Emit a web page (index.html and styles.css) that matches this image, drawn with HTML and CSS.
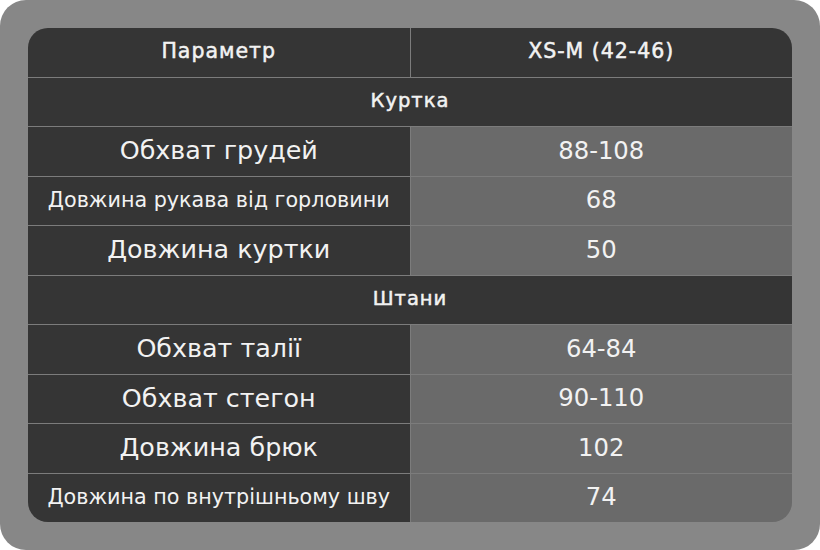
FILE: index.html
```html
<!DOCTYPE html>
<html lang="uk">
<head>
<meta charset="utf-8">
<link rel="stylesheet" href="styles.css">
</head>
<body>
<div class="frame">
  <div class="table">
    <div class="cell head">Параметр</div>
    <div class="cell head">XS-M (42-46)</div>
    <div class="cell section">Куртка</div>
    <div class="cell label">Обхват грудей</div>
    <div class="cell value">88-108</div>
    <div class="cell label small">Довжина рукава від горловини</div>
    <div class="cell value">68</div>
    <div class="cell label">Довжина куртки</div>
    <div class="cell value">50</div>
    <div class="cell section">Штани</div>
    <div class="cell label">Обхват талії</div>
    <div class="cell value">64-84</div>
    <div class="cell label">Обхват стегон</div>
    <div class="cell value">90-110</div>
    <div class="cell label">Довжина брюк</div>
    <div class="cell value">102</div>
    <div class="cell label small">Довжина по внутрішньому шву</div>
    <div class="cell value">74</div>
  </div>
</div>
</body>
</html>
```
FILE: styles.css
```css
html, body {
  margin: 0;
  padding: 0;
  background: #ffffff;
}
.frame {
  width: 820px;
  height: 550px;
  box-sizing: border-box;
  padding: 28px;
  background: #878787;
  border-radius: 26px;
}
.table {
  height: 494px;
  display: grid;
  grid-template-columns: 1fr 1fr;
  grid-template-rows: repeat(10, 1fr);
  gap: 1px;
  background: #7c7c7c;
  border-radius: 20px;
  overflow: hidden;
  font-family: "DejaVu Sans", sans-serif;
  color: #f2f2f2;
}
.cell {
  display: flex;
  align-items: center;
  justify-content: center;
  background: #353535;
  font-size: 25.4px;
  white-space: nowrap;
  padding-bottom: 2px;
}
.head {
  font-size: 20.5px;
  letter-spacing: 1px;
  -webkit-text-stroke: 0.5px #f2f2f2;
}
.section {
  grid-column: 1 / 3;
  font-size: 19.5px;
  letter-spacing: 1px;
  -webkit-text-stroke: 0.5px #f2f2f2;
}
.label.small {
  font-size: 20.7px;
}
.value {
  background: #6a6a6a;
  font-size: 24.3px;
}
```
